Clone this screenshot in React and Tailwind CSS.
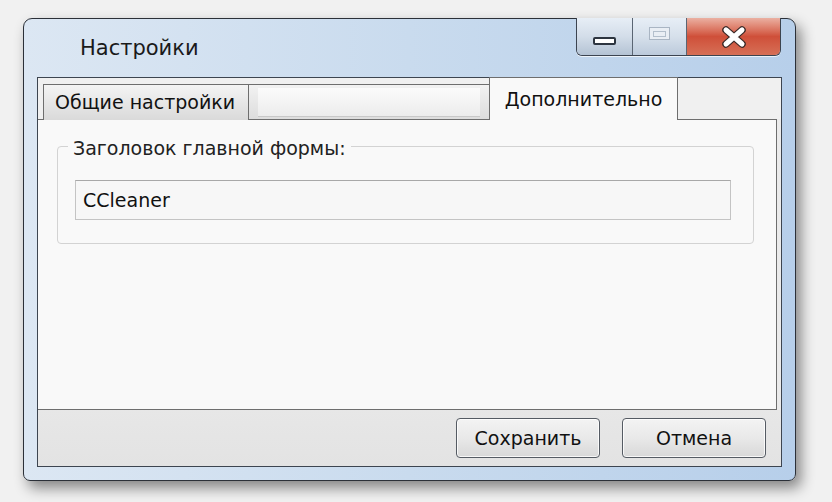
import React from "react";

const font = { fontFamily: '"DejaVu Sans", "Liberation Sans", sans-serif' };

function WindowButtons() {
  return (
    <div className="flex h-[38px] -mt-px rounded-b-[6px] border border-t-0 border-[#3c4450] overflow-hidden shadow-[0_1px_0_rgba(255,255,255,0.7)]">
      {/* minimize */}
      <div className="w-[56px] flex items-end justify-center pb-[10px] border-r border-[#5a6573] bg-gradient-to-b from-[#e7eef6] via-[#d3dde9] to-[#b4c3d4]">
        <div className="w-[23px] h-[8px] rounded-[2px] bg-white border-2 border-[#2d3540]" />
      </div>
      {/* maximize (disabled) */}
      <div className="w-[54px] flex items-start justify-center pt-[9px] border-r border-[#5a6573] bg-gradient-to-b from-[#e7eef6] via-[#d6e0eb] to-[#bccadb]">
        <div className="w-[21px] h-[13px] border border-[#a9b5c3] bg-[#e9eef4] flex items-center justify-center">
          <div className="w-[13px] h-[6px] border border-[#b3bfcc]" />
        </div>
      </div>
      {/* close */}
      <div className="w-[93px] flex items-center justify-center bg-gradient-to-b from-[#eab0a2] via-[#cf4f39] to-[#d66f56]">
        <svg width="28" height="24" viewBox="0 0 28 24">
          <path d="M6 5 L22 19 M22 5 L6 19" stroke="#3b2a28" strokeWidth="7.5" strokeLinecap="round" />
          <path d="M6 5 L22 19 M22 5 L6 19" stroke="#ffffff" strokeWidth="5" strokeLinecap="round" />
        </svg>
      </div>
    </div>
  );
}

function Tab({ children, className = "" }) {
  return (
    <div className={`flex items-center border border-[#6e6e6e] ${className}`}>{children}</div>
  );
}

function Button({ children }) {
  return (
    <button className="w-[144px] h-[40px] rounded-[4px] border border-[#555b63] bg-gradient-to-b from-[#f3f3f3] via-[#e9e9e9] to-[#d8d8d8] text-[19px] text-[#111] shadow-[inset_0_0_0_1px_rgba(255,255,255,0.8)]">
      {children}
    </button>
  );
}

export default function App() {
  return (
    <div className="w-[832px] h-[502px] bg-[#f1f1f1] pt-[18px] pl-[23px] overflow-hidden" style={font}>
      <div className="w-[773px] h-[463px] rounded-t-[9px] rounded-b-[7px] border border-[#2b3038] bg-gradient-to-r from-[#dce7f3] via-[#c9dbee] to-[#b7cfea] shadow-[5px_7px_14px_rgba(0,0,0,0.45)] flex flex-col">
        {/* title bar */}
        <div className="h-[58px] flex items-start justify-between pr-[14px]">
          <div className="pl-[56px] pt-[14px] text-[21px] text-[#1a1a1a]">Настройки</div>
          <WindowButtons />
        </div>

        {/* client area */}
        <div className="flex-1 mx-[13px] mb-[13px] border border-[#3d4550] bg-[#ebebeb] flex flex-col">
          {/* tab strip */}
          <div className="h-[41px] flex items-end pl-[5px] bg-[#f0f0f0]">
            <Tab className="w-[206px] h-[36px] pl-[11px] -mb-px bg-gradient-to-b from-[#f4f4f4] to-[#dadada] border-b-0 text-[19px] text-[#111] z-0">
              Общие настройки
            </Tab>
            <Tab className="w-[242px] h-[36px] -ml-px -mb-px border-b-0 bg-gradient-to-b from-[#f2f2f2] to-[#dcdcdc] px-[9px] py-[3px]">
              <div className="w-full h-full bg-gradient-to-b from-[#fbfbfb] to-[#ececec] border-b border-[#c8c8c8]" />
            </Tab>
            <div className="w-[189px] h-[43px] -ml-px -mb-px flex items-center justify-center border border-b-0 border-[#6e6e6e] bg-[#f9f9f9] text-[19px] text-[#111] z-10">
              Дополнительно
            </div>
            <div className="flex-1 h-full" />
          </div>

          {/* tab panel */}
          <div className="h-[291px] mr-[4px] border border-t-[#6e6e6e] border-l-0 border-r-[#6e6e6e] border-b-[#6e6e6e] bg-[#f9f9f9] pt-[26px] pl-[19px] pr-[22px]">
            <div className="relative h-[98px] rounded-[4px] border border-[#d3d3d3] pt-[33px] pl-[17px] pr-[22px]">
              <span className="absolute -top-[13px] left-[10px] px-[5px] bg-[#f9f9f9] text-[19px] text-[#222]">
                Заголовок главной формы:
              </span>
              <div className="h-[40px] border border-[#c4c4c4] border-t-[#a8a8a8] bg-[#f7f7f7] flex items-center pl-[7px] text-[19px] text-[#111]">
                CCleaner
              </div>
            </div>
          </div>

          {/* bottom buttons */}
          <div className="flex-1 flex items-center justify-end gap-[22px] pr-[15px] bg-gradient-to-b from-[#e7e7e7] to-[#e3e3e3]">
            <Button>Сохранить</Button>
            <Button>Отмена</Button>
          </div>
        </div>
      </div>
    </div>
  );
}
